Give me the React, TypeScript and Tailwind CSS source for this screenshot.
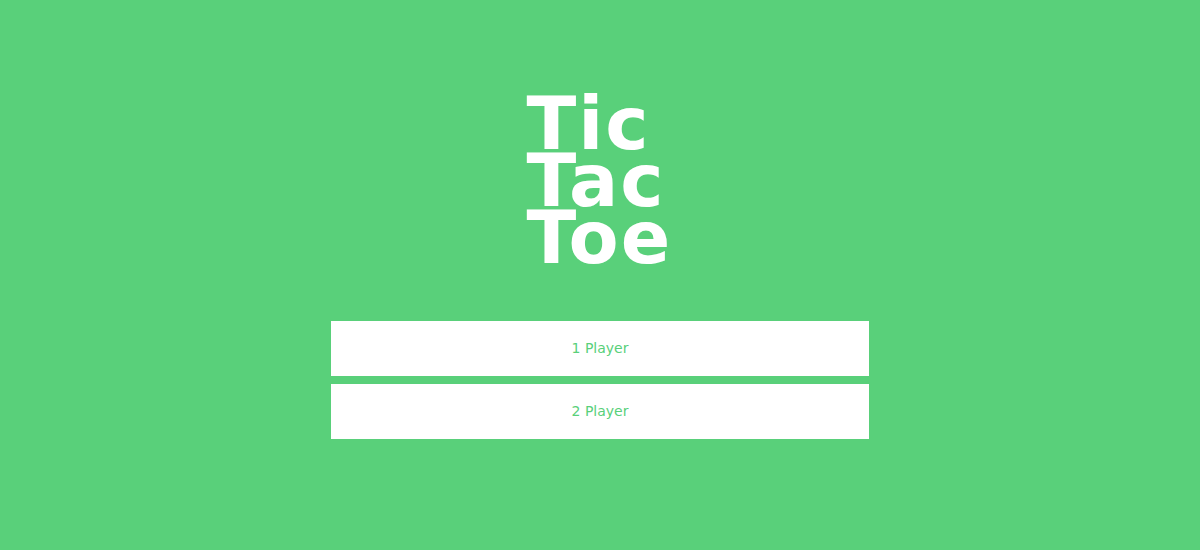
export default function App() {
  return (
    <div className="w-[1200px] h-[550px] bg-[#59d07a] flex flex-col items-center pt-[95px]">
      <h1 className="text-white font-bold text-[73px] leading-[57px] tracking-[2px] [font-family:'DejaVu_Sans',sans-serif] text-left w-[144px] ml-[-3px]">
        <div>Tic</div>
        <div>Tac</div>
        <div>Toe</div>
      </h1>
      <div className="mt-[55px] flex flex-col gap-[8px]">
        <button className="w-[538px] h-[55px] bg-white text-[#59d07a] text-[14px] [font-family:'DejaVu_Sans',sans-serif]">
          1 Player
        </button>
        <button className="w-[538px] h-[55px] bg-white text-[#59d07a] text-[14px] [font-family:'DejaVu_Sans',sans-serif]">
          2 Player
        </button>
      </div>
    </div>
  );
}
